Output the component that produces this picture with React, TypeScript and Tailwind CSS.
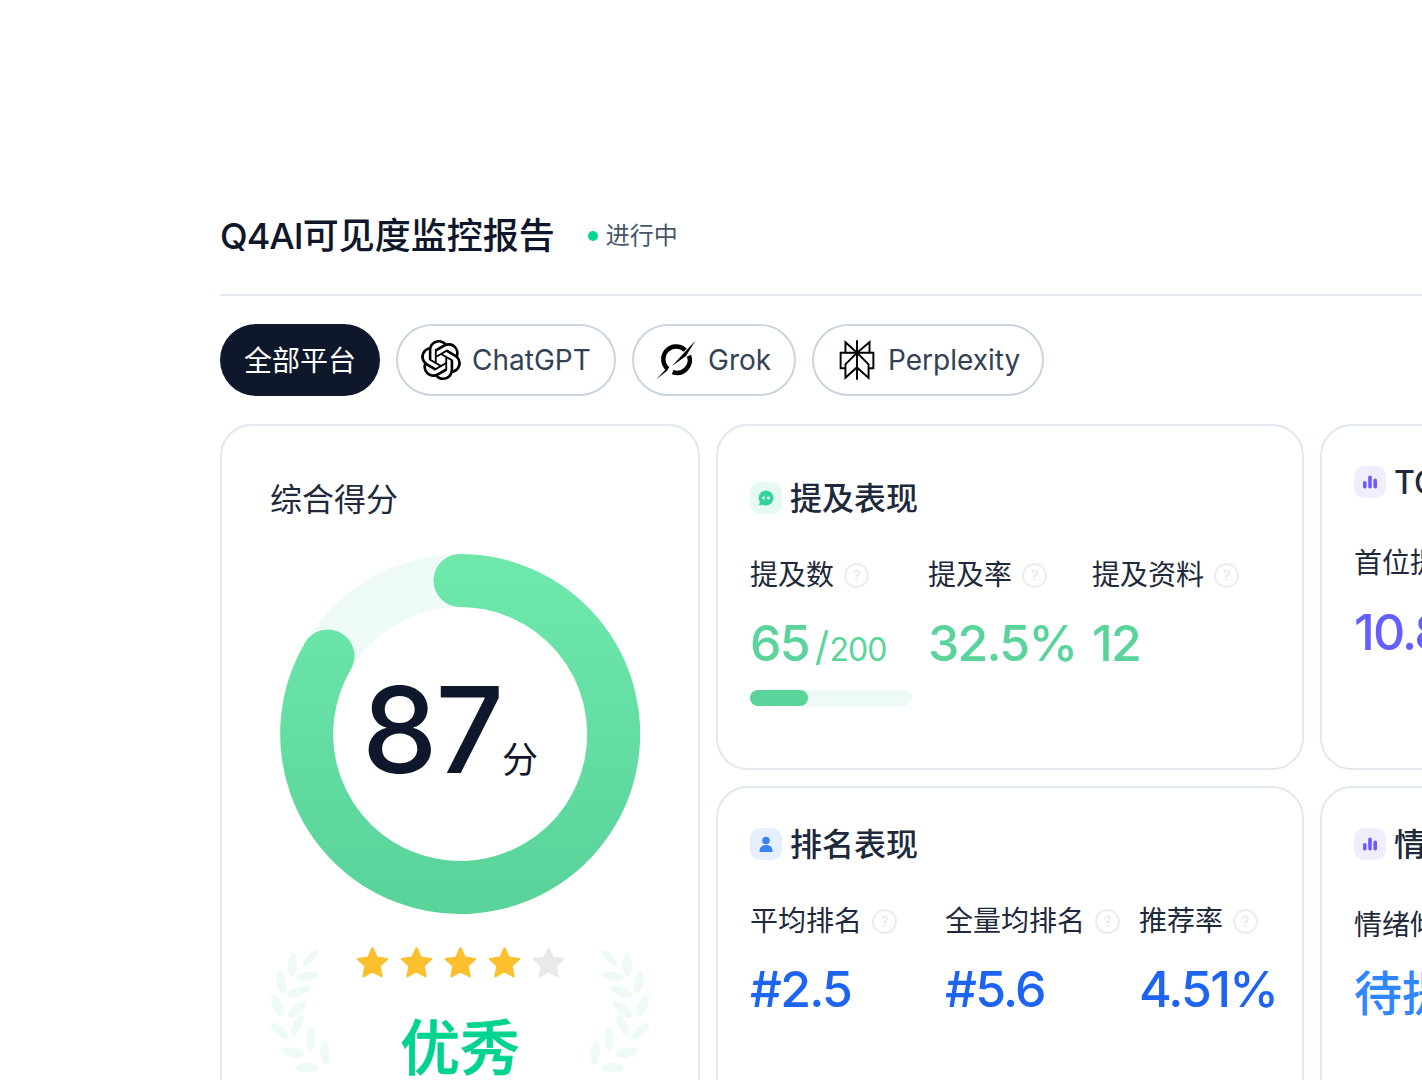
import React from 'react';

const LEAVES = [
  [182, 93, -45, 68, 22], [128, 113, -88, 72, 28], [172, 148, -10, 68, 26], [94, 166, 80, 70, 28],
  [146, 193, -20, 70, 28], [82, 235, 65, 70, 28], [142, 248, -40, 70, 28], [90, 313, 42, 70, 26],
  [142, 295, -65, 70, 26], [183, 335, -90, 70, 28], [130, 376, 12, 68, 28], [225, 378, 85, 70, 28],
  [172, 422, 0, 68, 28],
];

const Laurel: React.FC<{ flip?: boolean }> = ({ flip }) => (
  <svg width="60" height="130" viewBox="60 60 180 390" className={flip ? '-scale-x-100 shrink-0' : 'shrink-0'}>
    {LEAVES.map(([cx, cy, angle, len, wid], i) => (
      <ellipse key={i} cx={cx} cy={cy} rx={len / 2} ry={wid / 2} fill="#eefaf6" transform={`rotate(${angle} ${cx} ${cy})`} />
    ))}
  </svg>
);

const OpenAIIcon = () => (
  <svg width="40" height="40" viewBox="0 0 24 24" fill="#000">
    <path d="M22.2819 9.8211a5.9847 5.9847 0 0 0-.5157-4.9108 6.0462 6.0462 0 0 0-6.5098-2.9A6.0651 6.0651 0 0 0 4.9807 4.1818a5.9847 5.9847 0 0 0-3.9977 2.9 6.0462 6.0462 0 0 0 .7427 7.0966 5.98 5.98 0 0 0 .511 4.9107 6.051 6.051 0 0 0 6.5146 2.9001A5.9847 5.9847 0 0 0 13.2599 24a6.0557 6.0557 0 0 0 5.7718-4.2058 5.9894 5.9894 0 0 0 3.9977-2.9001 6.0557 6.0557 0 0 0-.7475-7.0729zm-9.022 12.6081a4.4755 4.4755 0 0 1-2.8764-1.0408l.1419-.0804 4.7783-2.7582a.7948.7948 0 0 0 .3927-.6813v-6.7369l2.02 1.1686a.071.071 0 0 1 .038.052v5.5826a4.504 4.504 0 0 1-4.4945 4.4944zm-9.6607-4.1254a4.4708 4.4708 0 0 1-.5346-3.0137l.142.0852 4.783 2.7582a.7712.7712 0 0 0 .7806 0l5.8428-3.3685v2.3324a.0804.0804 0 0 1-.0332.0615L9.74 19.9502a4.4992 4.4992 0 0 1-6.1408-1.6464zM2.3408 7.8956a4.485 4.485 0 0 1 2.3655-1.9728V11.6a.7664.7664 0 0 0 .3879.6765l5.8144 3.3543-2.0201 1.1685a.0757.0757 0 0 1-.071 0l-4.8303-2.7865A4.504 4.504 0 0 1 2.3408 7.872zm16.5963 3.8558L13.1038 8.364 15.1192 7.2a.0757.0757 0 0 1 .071 0l4.8303 2.7913a4.4944 4.4944 0 0 1-.6765 8.1042v-5.6772a.79.79 0 0 0-.407-.667zm2.0107-3.0231l-.142-.0852-4.7735-2.7818a.7759.7759 0 0 0-.7854 0L9.409 9.2297V6.8974a.0662.0662 0 0 1 .0284-.0615l4.8303-2.7866a4.4992 4.4992 0 0 1 6.6802 4.66zM8.3065 12.863l-2.02-1.1638a.0804.0804 0 0 1-.038-.0567V6.0742a4.4992 4.4992 0 0 1 7.3757-3.4537l-.142.0805L8.704 5.459a.7948.7948 0 0 0-.3927.6813zm1.0976-2.3654l2.602-1.4998 2.6069 1.4998v2.9994l-2.5974 1.4997-2.6067-1.4997Z" />
  </svg>
);

const GrokIcon = () => (
  <svg width="40" height="40" viewBox="0 0 40 40" fill="none">
    <path d="M10.95 29.05 A12.8 12.8 0 1 1 28.23 10.2" stroke="#000" strokeWidth="4.5" />
    <path d="M32.03 15.62 A12.8 12.8 0 0 1 15.62 32.03" stroke="#000" strokeWidth="4.5" />
    <path d="M38.5 .5 L15 26 L29 16 Z" fill="#000" />
    <path d="M-1 39.5 L9.5 28.5 L11 30 Z" fill="#000" />
  </svg>
);

const PerplexityIcon = () => (
  <svg width="40" height="40" viewBox="0 0 24 24" fill="#000">
    <path d="M22.3977 7.0896h-2.3106V.0676l-7.5094 6.3542V.1577h-1.1554v6.1966L4.4904 0v7.0896H1.6023v10.3976h2.8882V24l6.932-6.3591v6.2005h1.1554v-6.0469l6.9318 6.1807v-6.4879h2.8882V7.0896zm-3.4657-4.531v4.531h-5.355l5.355-4.531zm-13.2862.0676 4.8691 4.4634H5.6458V2.6262zM2.7576 16.332V8.245h7.8476l-6.1149 6.1147v1.9723H2.7576zm2.8882 5.0404v-3.8852h.0001v-2.6488l5.7763-5.7764v7.0111l-5.7764 5.2993zm12.7086.0248-5.7766-5.1509V9.0618l5.7766 5.7766v6.5588zm2.8882-5.0652h-1.733v-1.9723L13.3948 8.245h7.8478v8.087z" />
  </svg>
);

const Star: React.FC<{ on?: boolean }> = ({ on }) => (
  <svg width="35" height="35" viewBox="0 0 32 32" className="shrink-0">
    <path
      d="M16 3 L20 11.6 L29.4 12.8 L22.5 19.2 L24.3 28.6 L16 24 L7.7 28.6 L9.5 19.2 L2.6 12.8 L12 11.6 Z"
      fill={on ? '#fcc02e' : '#e9e9e9'}
      stroke={on ? '#fcc02e' : '#e9e9e9'}
      strokeWidth="2"
      strokeLinejoin="round"
    />
  </svg>
);

const Help = () => (
  <span className="ml-[10px] flex h-[25px] w-[25px] shrink-0 items-center justify-center rounded-full border-2 border-[#e8edf5] text-[15px] leading-none text-[#e2e8f0]">
    ?
  </span>
);

const Chip: React.FC<{ icon: React.ReactNode; label: string; className?: string }> = ({ icon, label, className }) => (
  <div className={`flex h-[72px] items-center gap-[11px] rounded-full border-2 border-[#cbd5e1] pl-[23px] text-[28px] text-[#334155] ${className}`}>
    {icon}
    <span>{label}</span>
  </div>
);

const CardTitle: React.FC<{ icon: React.ReactNode; bg: string; title: string }> = ({ icon, bg, title }) => (
  <div className="flex h-8 items-center gap-2">
    <span className={`flex h-8 w-8 shrink-0 items-center justify-center rounded-[10px] ${bg}`}>{icon}</span>
    <span className="mt-[2px] whitespace-nowrap text-[32px] font-medium leading-none text-[#1e293b]">{title}</span>
  </div>
);

const Label: React.FC<{ text: string; help?: boolean }> = ({ text, help = true }) => (
  <div className="flex h-10 items-center whitespace-nowrap text-[28px] text-[#1e293b]">
    <span>{text}</span>
    {help && <Help />}
  </div>
);

const Num: React.FC<{ color: string; children: React.ReactNode }> = ({ color, children }) => (
  <div className={`mt-[18px] h-[60px] whitespace-nowrap text-[50px] font-medium leading-[60px] tracking-[-1.8px] ${color}`}>
    {children}
  </div>
);

const ChatBadge = () => (
  <svg width="18" height="18" viewBox="0 0 18 18">
    <path d="M9 1.5a7.5 7.5 0 1 1-3.4 14.2L2 16.5l.9-3.4A7.5 7.5 0 0 1 9 1.5z" fill="#34d399" />
    <circle cx="6.5" cy="9" r="1.4" fill="#fff" />
    <circle cx="11.5" cy="9" r="1.4" fill="#fff" />
  </svg>
);

const UserBadge = () => (
  <svg width="18" height="18" viewBox="0 0 18 18" fill="#3b82f6">
    <circle cx="9" cy="5.5" r="3.8" />
    <path d="M2.5 16c0-4 2.5-6 6.5-6s6.5 2 6.5 6c0 .6-.4 1-1 1h-11c-.6 0-1-.4-1-1z" />
  </svg>
);

const BarsBadge = () => (
  <svg width="18" height="18" viewBox="0 0 18 18" fill="#6c5cff">
    <rect x="2" y="8" width="3.6" height="7.5" rx="1.8" />
    <rect x="7.2" y="2.5" width="3.6" height="13" rx="1.8" />
    <rect x="12.4" y="5.5" width="3.6" height="10" rx="1.8" />
  </svg>
);

const ScoreRing = () => (
  <div className="relative h-[360px] w-[360px]">
    <svg width="360" height="360" viewBox="0 0 360 360" fill="none">
      <defs>
        <linearGradient id="ring" x1="0" y1="0" x2="0" y2="1">
          <stop offset="0" stopColor="#6ee7ab" />
          <stop offset="1" stopColor="#5ad49a" />
        </linearGradient>
      </defs>
      <circle cx="180" cy="180" r="153.5" stroke="#eefaf6" strokeWidth="53" />
      <path
        d="M180 26.5 A153.5 153.5 0 1 1 48 102"
        stroke="url(#ring)"
        strokeWidth="53"
        strokeLinecap="round"
      />
    </svg>
    <div className="absolute inset-0 flex items-baseline justify-center pr-[20px] pt-[101px] text-[#0f172a]">
      <span className="text-[120px] font-medium leading-[150px] tracking-[-2px]">87</span>
      <span className="text-[36px] leading-none">分</span>
    </div>
  </div>
);

const App: React.FC = () => {
  return (
    <div className="h-[1080px] w-[1422px] overflow-hidden bg-white pl-[220px] pt-[208px] font-[Inter,'Noto_Sans_CJK_SC',sans-serif]">
      <div className="w-[1400px]">
        <div className="flex h-14 items-center">
          <h1 className="text-[36px] font-medium leading-none text-[#0f172a]">
            <span className="tracking-[-1px]">Q4AI</span>可见度监控报告
          </h1>
          <span className="ml-[33px] h-[10px] w-[10px] rounded-full bg-[#00d98b]" />
          <span className="ml-2 text-[24px] text-[#475569]">进行中</span>
        </div>
        <div className="mt-[30px] h-[2px] bg-[#e2e8f0]" />

        <div className="mt-7 flex gap-4">
          <div className="flex h-[72px] w-40 items-center justify-center rounded-full bg-[#0f172a] pt-[2px] text-[28px] text-white">
            全部平台
          </div>
          <Chip icon={<OpenAIIcon />} label="ChatGPT" className="w-[220px]" />
          <Chip icon={<GrokIcon />} label="Grok" className="w-[164px]" />
          <Chip icon={<PerplexityIcon />} label="Perplexity" className="w-[232px]" />
        </div>

        <div className="mt-7 grid grid-cols-[480px_588px_588px] grid-rows-[346px_auto] gap-4">
          <section className="row-span-2 h-[700px] rounded-[32px] border-2 border-[#e2e8f0] px-12 pt-[54px]">
            <div className="text-[32px] leading-10 text-[#1e293b]">综合得分</div>
            <div className="mt-[34px] flex justify-center">
              <ScoreRing />
            </div>
            <div className="mt-[33px] flex justify-between">
              <Laurel />
              <div className="-mt-[2px] flex flex-col items-center">
                <div className="flex gap-[9px]">
                  <Star on />
                  <Star on />
                  <Star on />
                  <Star on />
                  <Star />
                </div>
                <div className="mt-[28px] text-[60px] font-medium leading-[80px] text-[#00d28f] [-webkit-text-stroke:0.6px]">
                  优秀
                </div>
              </div>
              <Laurel flip />
            </div>
          </section>

          <section className="rounded-[32px] border-2 border-[#e2e8f0] px-8 pt-[56px]">
            <CardTitle icon={<ChatBadge />} bg="bg-[#e6faf2]" title="提及表现" />
            <div className="mt-[41px] flex gap-4">
              <div className="w-[162px] shrink-0">
                <Label text="提及数" />
                <Num color="text-[#5ad49a]">
                  65
                  <span className="ml-[6px] text-[40px] font-normal leading-none">/</span>
                  <span className="ml-[2px] text-[32px] font-normal leading-none tracking-[-1px]">200</span>
                </Num>
                <div className="mt-[17px] h-4 rounded-full bg-[#eefaf6]">
                  <div className="h-4 w-[58px] rounded-full bg-[#5ad49a]" />
                </div>
              </div>
              <div className="w-[148px] shrink-0">
                <Label text="提及率" />
                <Num color="text-[#5ad49a]">32.5%</Num>
              </div>
              <div>
                <Label text="提及资料" />
                <Num color="text-[#5ad49a]">12</Num>
              </div>
            </div>
          </section>

          <section className="rounded-[32px] border-2 border-[#e2e8f0] px-8 pt-10">
            <CardTitle icon={<BarsBadge />} bg="bg-[#f0edff]" title="TOP表现" />
            <div className="mt-[45px]">
              <Label text="首位提及率" help={false} />
              <div className="pt-px">
                <Num color="text-[#6360ff]">10.8%</Num>
              </div>
            </div>
          </section>

          <section className="h-[400px] rounded-[32px] border-2 border-[#e2e8f0] px-8 pt-10">
            <CardTitle icon={<UserBadge />} bg="bg-[#e5efff]" title="排名表现" />
            <div className="mt-[41px] flex">
              <div className="w-[195px] shrink-0">
                <Label text="平均排名" />
                <Num color="text-[#1d64f2]">#2.5</Num>
              </div>
              <div className="w-[194px] shrink-0">
                <Label text="全量均排名" />
                <Num color="text-[#1d64f2]">#5.6</Num>
              </div>
              <div className="shrink-0">
                <Label text="推荐率" />
                <Num color="text-[#1d64f2]">4.51%</Num>
              </div>
            </div>
          </section>

          <section className="h-[400px] rounded-[32px] border-2 border-[#e2e8f0] px-8 pt-10">
            <CardTitle icon={<BarsBadge />} bg="bg-[#f0edff]" title="情感表现" />
            <div className="mt-[45px]">
              <Label text="情绪倾向" help={false} />
              <div className="mt-[19px] text-[48px] font-medium leading-[60px] text-[#2f86ff]">待提升</div>
            </div>
          </section>
        </div>
      </div>
    </div>
  );
};

export default App;
